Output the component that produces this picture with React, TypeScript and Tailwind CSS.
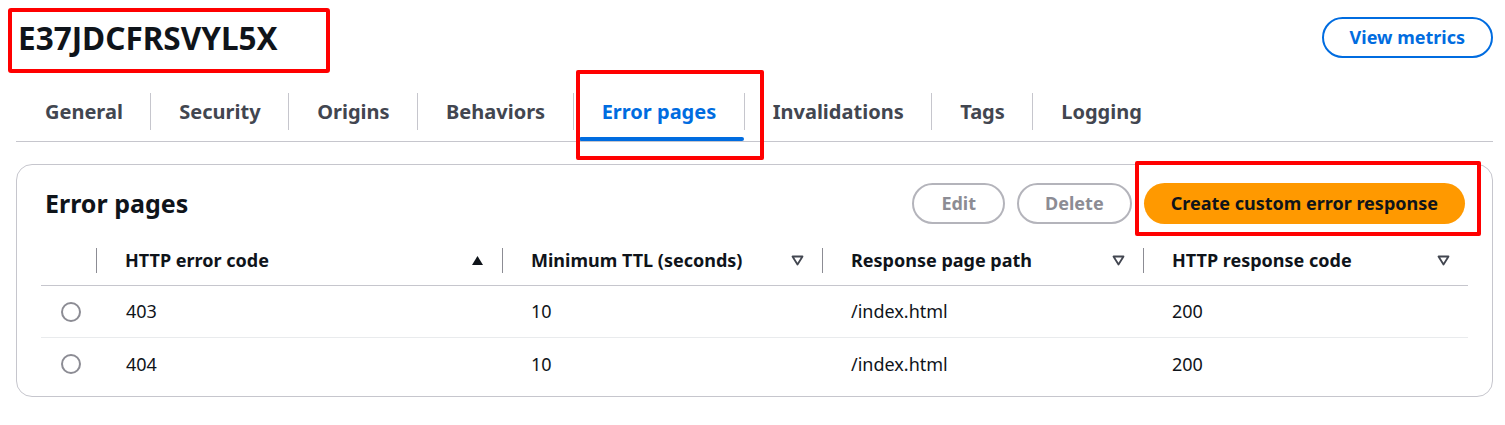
import React from 'react';

const tabs = ['General', 'Security', 'Origins', 'Behaviors', 'Error pages', 'Invalidations', 'Tags', 'Logging'];
const active = 'Error pages';

const rows = [
  { code: '403', ttl: '10', path: '/index.html', resp: '200' },
  { code: '404', ttl: '10', path: '/index.html', resp: '200' },
];

function SortUp() {
  return (
    <svg width="13" height="11" viewBox="0 0 13 11">
      <path d="M6.5 1 L12 10 L1 10 Z" fill="#0f141a" />
    </svg>
  );
}

function SortDown() {
  return (
    <svg width="13" height="11" viewBox="0 0 13 11">
      <path d="M1.5 1.5 L11.5 1.5 L6.5 9.5 Z" fill="none" stroke="#424650" strokeWidth="1.8" strokeLinejoin="round" />
    </svg>
  );
}

function HeaderCell({ label, sort }: { label: string; sort: 'up' | 'down' }) {
  return (
    <div className="flex items-center h-full">
      <div className="flex items-center justify-between w-full h-[25px] border-l border-[#8c8c94] pl-[28px] pr-[18px]">
        <span>{label}</span>
        {sort === 'up' ? <SortUp /> : <SortDown />}
      </div>
    </div>
  );
}

export default function App() {
  return (
    <div
      className="relative w-[1505px] h-[425px] bg-white text-[#0f141a] pl-[16px] pr-[12px] overflow-hidden"
      style={{ fontFamily: '"Noto Sans", "Open Sans", sans-serif' }}
    >
      {/* title row */}
      <div className="flex items-center justify-between pt-[17px] h-[58px]">
        <h1 className="ml-[2px] text-[31.5px] font-bold leading-none">E37JDCFRSVYL5X</h1>
        <button className="h-[41px] px-[26px] rounded-full border-2 border-[#006ce0] text-[#006ce0] text-[18px] font-bold">
          View metrics
        </button>
      </div>

      {/* tabs */}
      <div className="flex mt-[35px] border-b border-[#c6c6cd]">
        {tabs.map((t, i) => (
          <div key={t} className="flex flex-col">
            <div
              className={
                'flex items-center h-[37px] text-[20px] font-bold pr-[27.5px] ' +
                (i === 0 ? 'pl-[29px] ' : 'pl-[28px] border-l border-[#c6c6cd] ') +
                (t === active ? 'text-[#006ce0]' : 'text-[#424650]')
              }
            >
              {t}
            </div>
            <div className={'mt-[7px] h-[4px] rounded-full ml-[6px] ' + (t === active ? 'bg-[#006ce0]' : 'bg-transparent')} />
          </div>
        ))}
      </div>

      {/* error pages container */}
      <div className="mt-[22px] border border-[#c6c6cd] rounded-[16px] pt-[18px] pb-[6px]">
        <div className="flex items-center justify-between pl-[28px] pr-[27px]">
          <h2 className="text-[25px] font-bold leading-none">Error pages</h2>
          <div className="flex gap-[12px]">
            <button className="h-[41px] px-[27px] rounded-full border-2 border-[#b4b4bb] text-[#8c8c94] text-[18px] font-bold">
              Edit
            </button>
            <button className="h-[41px] px-[26px] rounded-full border-2 border-[#b4b4bb] text-[#8c8c94] text-[18px] font-bold">
              Delete
            </button>
            <button className="h-[41px] px-[27px] rounded-full bg-[#ff9900] text-[#0f141a] text-[18px] font-bold">
              Create custom error response
            </button>
          </div>
        </div>

        <div className="mx-[24px] mt-[11px] text-[18px]">
          <div className="grid grid-cols-[56px_405px_320px_321px_1fr] h-[51px] border-b border-[#c6c6cd] font-bold">
            <div className="flex items-center justify-end h-full">
              <div className="h-[25px] w-px bg-[#8c8c94]" />
            </div>
            <div className="h-full -ml-px">
              <HeaderCell label="HTTP error code" sort="up" />
            </div>
            <HeaderCell label="Minimum TTL (seconds)" sort="down" />
            <HeaderCell label="Response page path" sort="down" />
            <HeaderCell label="HTTP response code" sort="down" />
          </div>
          {rows.map((r, i) => (
            <div
              key={r.code}
              className={
                'grid grid-cols-[56px_405px_320px_321px_1fr] h-[52px] items-center ' +
                (i < rows.length - 1 ? 'border-b border-[#e9ebed]' : '')
              }
            >
              <div className="pl-[20px] flex items-center">
                <span className="w-[20px] h-[20px] rounded-full border-2 border-[#8c8c94] bg-white" />
              </div>
              <div className="pl-[29px]">{r.code}</div>
              <div className="pl-[29px]">{r.ttl}</div>
              <div className="pl-[29px]">{r.path}</div>
              <div className="pl-[29px]">{r.resp}</div>
            </div>
          ))}
        </div>
      </div>

      {/* red annotation boxes */}
      <div className="absolute left-[8px] top-[8px] w-[322px] h-[65px] border-[4px] border-[#ff0000] rounded-[3px] pointer-events-none" />
      <div className="absolute left-[576px] top-[70px] w-[188px] h-[90px] border-[4px] border-[#ff0000] rounded-[2px] pointer-events-none" />
      <div className="absolute left-[1135px] top-[161px] w-[346px] h-[75px] border-[4px] border-[#ff0000] rounded-[2px] pointer-events-none" />
    </div>
  );
}
